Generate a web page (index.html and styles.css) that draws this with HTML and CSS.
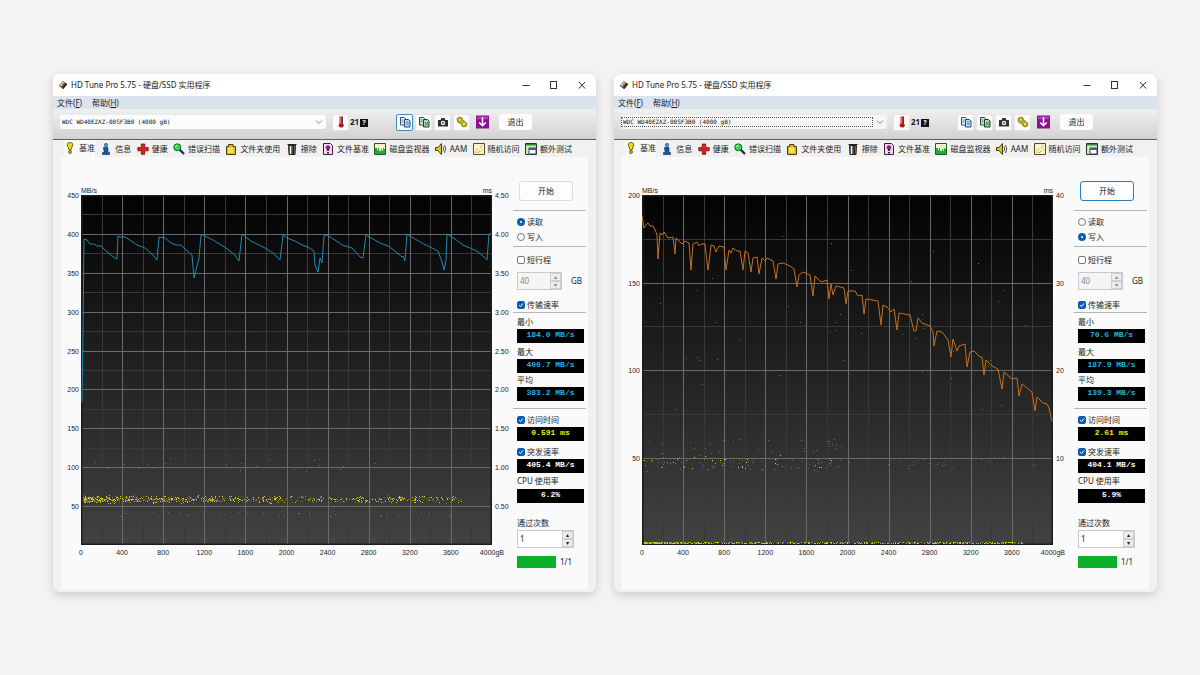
FILE: index.html
```html
<!DOCTYPE html>
<html lang="zh-CN">
<head>
<meta charset="utf-8">
<title>HD Tune Pro 5.75</title>
<link rel="stylesheet" href="styles.css">
</head>
<body>
<svg class="defs" aria-hidden="true">
  <defs>
    <linearGradient id="plot-bg" x1="0" y1="0" x2="0" y2="1"><stop offset="0" stop-color="#020202"/><stop offset="1" stop-color="#424242"/></linearGradient>
  </defs>
  <symbol id="i-app" viewBox="0 0 12 12"><path d="M1 7 6 1l5 4-5 6z" fill="#5b4636"/><path d="M2 6 6 1.500 8 3 4 8z" fill="#d8c8a8"/><path d="M6 8 10 4l1 1-5 6z" fill="#2d2623"/><circle cx="6" cy="5" r="1.200" fill="#b06a2c"/></symbol>
  <symbol id="i-min" viewBox="0 0 10 10"><path d="M1.500 5.500h7" stroke="#333" fill="none"/></symbol>
  <symbol id="i-max" viewBox="0 0 10 10"><rect x="1.500" y="1.500" width="6" height="7" stroke="#333" fill="none"/></symbol>
  <symbol id="i-close" viewBox="0 0 10 10"><path d="m2 2 6 6.500M8 2 2 8.500" stroke="#333" fill="none"/></symbol>
  <symbol id="i-chev" viewBox="0 0 8 6"><path d="M1 1.500 4 4.500 7 1.500" fill="none" stroke="#888"/></symbol>
  <symbol id="i-therm" viewBox="0 0 12 12"><path d="M4.500 .5h3v7h-3z" fill="#d41c1c"/><circle cx="6" cy="9.200" r="2.300" fill="#b81414"/><path d="M7.500 .5v7l1 2-1.500 2" stroke="#3c2222" fill="none" stroke-width=".8"/><path d="M5.500 1.500v6" stroke="#ff9a9a" stroke-width=".7"/></symbol>
  <symbol id="i-copy" viewBox="0 0 12 12"><path d="M1.500 1.500h4l1 1v6.500h-5z" fill="#e8f4ff" stroke="#35536f"/><path d="M5.500 3.500h4l1.500 1.500v6h-5.500z" fill="#b9dcf7" stroke="#244a73"/><path d="M2.500 4h2m-2 2h2M7 6h2.500M7 8h3" stroke="#3d7dc2"/></symbol>
  <symbol id="i-copyx" viewBox="0 0 12 12"><path d="M1.500 1.500h4l1 1v6.500h-5z" fill="#d9eedd" stroke="#2f4437"/><path d="M5.500 3.500h4l1.500 1.500v6h-5.500z" fill="#a9d8b4" stroke="#243b2c"/><path d="M2.500 4h2m-2 2h2M7 6l3 3.500M10 6 7 9.500" stroke="#268042"/></symbol>
  <symbol id="i-cam" viewBox="0 0 12 12"><path d="M1 4h2.500l1-2h3l1 2H11v6.500H1z" fill="#2c332f"/><circle cx="6" cy="7" r="2.200" fill="#f1f4f2"/><circle cx="6" cy="7" r="1.100" fill="#4f625a"/></symbol>
  <symbol id="i-gears" viewBox="0 0 12 12"><path d="M1.500 2 4 1l2 1 .500 2L9 5.500l2 2-.500 2.500-2.500 1L6 10 5 7.500 2 6.500 1 4z" fill="#b8ae1c" stroke="#7d760f" stroke-width=".8"/><circle cx="3.800" cy="3.800" r=".8" fill="#fbf9d0"/><circle cx="8" cy="8" r=".9" fill="#fbf9d0"/></symbol>
  <symbol id="i-down" viewBox="0 0 14 14"><path d="M0 0h14v14H0z" fill="#8a118e"/><path d="M1 1h12v3H1z" fill="#b43cb8"/><path d="M7 2v8M3.500 7.500 7 11l3.500-3.500" stroke="#fff" stroke-width="1.700" fill="none"/></symbol>
  <symbol id="i-bench" viewBox="0 0 12 12"><path d="M6 .5C8 .5 9 1.500 8.700 3L7 8H5L3.300 3C3 1.500 4 .5 6 .5z" fill="#e3dd1c" stroke="#4b480b" stroke-width=".8"/><circle cx="6" cy="10" r="1.500" fill="#d8d116" stroke="#4b480b" stroke-width=".8"/></symbol>
  <symbol id="i-info" viewBox="0 0 12 12"><circle cx="6" cy="2" r="1.700" fill="#31a4d8" stroke="#123c6b" stroke-width=".6"/><path d="M3.500 4.500h4.500v5H9.500v2H2.500v-2h1.500v-3H3.500z" fill="#1c55a8" stroke="#0e2850" stroke-width=".6"/></symbol>
  <symbol id="i-health" viewBox="0 0 12 12"><path d="M4.300 1h3.400v3.500h3.500v3.300H7.700v3.500H4.300V7.800H.8V4.500h3.500z" fill="#d92323" stroke="#701010" stroke-width=".8"/></symbol>
  <symbol id="i-scan" viewBox="0 0 12 12"><path d="m6.500 6.500 4.500 4.500" stroke="#1a2c55" stroke-width="2.300"/><circle cx="4.300" cy="4.300" r="3.500" fill="#37d84a" stroke="#12642a"/><path d="M2.500 4A2 2 0 0 1 4.500 2.300" stroke="#d4ffd9" fill="none"/></symbol>
  <symbol id="i-folder" viewBox="0 0 12 12"><path d="M1.500 3.500h2v-2H8v2h2.500v8h-9z" fill="#d9b61c" stroke="#4f3f09"/><path d="M3 4.500h5.500v5.500H3z" fill="#f5e05a"/></symbol>
  <symbol id="i-trash" viewBox="0 0 12 12"><path d="M1.500 1.500h9" stroke="#222"/><path d="M2.500 2.500h7l-.500 9H3z" fill="#777" stroke="#222"/><path d="M4.500 3v8" stroke="#eee"/><path d="M7.200 3v8" stroke="#222" stroke-width="1.500"/></symbol>
  <symbol id="i-filebench" viewBox="0 0 12 12"><path d="M1.500.5h7l2 2v9h-9z" fill="#efd7ee" stroke="#3a233a"/><circle cx="6" cy="4.500" r="2.300" fill="#862482"/><path d="M5 6h2v2H5zM5 9h2v1.500H5z" fill="#521550"/></symbol>
  <symbol id="i-mon" viewBox="0 0 12 12"><path d="M.5.5h11v11H.5z" fill="#f1f6c8" stroke="#28542c"/><path d="M1 11V5h2v2h1V5h1v3h2V6h1v2h1V5h1v1h1v5z" fill="#1fae35"/></symbol>
  <symbol id="i-aam" viewBox="0 0 12 12"><path d="M.500 4.500H3l3.500-4v11L3 7.500H.500z" fill="#d7c91e" stroke="#433e0b"/><path d="M8 3.500q1.500 2.500 0 5M9.500 2q2.500 4 0 8" stroke="#444" fill="none" stroke-width=".9"/></symbol>
  <symbol id="i-rand" viewBox="0 0 12 12"><path d="M.5.5h11v11H.5z" fill="#fbf4c8" stroke="#5a4a2a"/><path d="M2 9h1.500M3.500 6.500H5M6 8.500h1.500M7 4.500h1.500M8.500 7H10M4.500 9.500H6M8 2.500h1.500" stroke="#d6a43a"/></symbol>
  <symbol id="i-extra" viewBox="0 0 12 12"><path d="M.5.5h11v11H.5z" fill="#cfeab4" stroke="#26392a"/><path d="M1 1h10v1.500H1z" fill="#2d8a3c"/><path d="M4 5h7v6H4z" fill="#fff" stroke="#3f3f6e"/><path d="M4 5h7v2H4z" fill="#55519e"/></symbol>
</svg>

<main class="desk">
  <section class="window">
    <header class="title">
      <svg class="app-icon"><use href="#i-app"/></svg>
      <h1>HD Tune Pro 5.75 - 硬盘/SSD 实用程序</h1>
      <button class="cap" aria-label="最小化"><svg><use href="#i-min"/></svg></button>
      <button class="cap" aria-label="最大化"><svg><use href="#i-max"/></svg></button>
      <button class="cap" aria-label="关闭"><svg><use href="#i-close"/></svg></button>
    </header>
    <nav class="menu"><button>文件(<u>F</u>)</button><button>帮助(<u>H</u>)</button></nav>
    <div class="toolbar">
      <div class="combo"><select aria-label="驱动器"><option>WDC WD40EZAZ-00SF3B0 (4000 gB)</option></select><svg><use href="#i-chev"/></svg></div>
      <button class="tool" aria-label="温度"><svg><use href="#i-therm"/></svg></button>
      <span class="temp">21<b>?</b></span>
      <div class="tools">
        <button class="tool on" aria-label="复制信息"><svg><use href="#i-copy"/></svg></button>
        <button class="tool" aria-label="复制截图"><svg><use href="#i-copyx"/></svg></button>
        <button class="tool" aria-label="保存截图"><svg><use href="#i-cam"/></svg></button>
        <button class="tool" aria-label="选项"><svg><use href="#i-gears"/></svg></button>
        <button class="tool bare" aria-label="下载"><svg><use href="#i-down"/></svg></button>
      </div>
      <button class="exit">退出</button>
    </div>
    <div class="tabs" role="tablist">
      <button class="tab active" role="tab"><svg><use href="#i-bench"/></svg>基准</button>
      <button class="tab" role="tab"><svg><use href="#i-info"/></svg>信息</button>
      <button class="tab" role="tab"><svg><use href="#i-health"/></svg>健康</button>
      <button class="tab" role="tab"><svg><use href="#i-scan"/></svg>错误扫描</button>
      <button class="tab" role="tab"><svg><use href="#i-folder"/></svg>文件夹使用</button>
      <button class="tab" role="tab"><svg><use href="#i-trash"/></svg>擦除</button>
      <button class="tab" role="tab"><svg><use href="#i-filebench"/></svg>文件基准</button>
      <button class="tab" role="tab"><svg><use href="#i-mon"/></svg>磁盘监视器</button>
      <button class="tab" role="tab"><svg><use href="#i-aam"/></svg>AAM</button>
      <button class="tab" role="tab"><svg><use href="#i-rand"/></svg>随机访问</button>
      <button class="tab" role="tab"><svg><use href="#i-extra"/></svg>额外测试</button>
    </div>
    <div class="panel">
      <div class="chart">
        <div class="units"><span>MB/s</span><span>ms</span></div>
        <div class="axis left"><span>450</span><span>400</span><span>350</span><span>300</span><span>250</span><span>200</span><span>150</span><span>100</span><span>50</span></div>
        <svg class="plot" data-chart="read" viewBox="0 0 411 350" preserveAspectRatio="none" role="img" aria-label="读取速率曲线"></svg>
        <div class="axis right"><span>4.50</span><span>4.00</span><span>3.50</span><span>3.00</span><span>2.50</span><span>2.00</span><span>1.50</span><span>1.00</span><span>0.50</span></div>
        <div class="xaxis"><span>0</span><span>400</span><span>800</span><span>1200</span><span>1600</span><span>2000</span><span>2400</span><span>2800</span><span>3200</span><span>3600</span><span>4000gB</span></div>
      </div>
      <form class="side">
        <button type="button" class="start">开始</button>
        <div class="group radios">
          <label><input type="radio" name="mode-a" checked>读取</label>
          <label><input type="radio" name="mode-a">写入</label>
        </div>
        <div class="group stroke">
          <label><input type="checkbox">短行程</label>
          <div class="row"><span class="spin off"><input type="text" value="40" aria-label="短行程容量" disabled><span class="arrows"><button type="button" aria-label="增加" disabled></button><button type="button" aria-label="减少" disabled></button></span></span><span class="gb">GB</span></div>
          <label><input type="checkbox" checked>传输速率</label>
        </div>
        <div class="group rates">
          <span>最小</span><output class="cyan">184.0 MB/s</output>
          <span>最大</span><output class="cyan">400.7 MB/s</output>
          <span class="tight">平均</span><output class="cyan">383.2 MB/s</output>
        </div>
        <div class="group access">
          <label><input type="checkbox" checked>访问时间</label><output class="yellow">0.591 ms</output>
          <label><input type="checkbox" checked>突发速率</label><output>405.4 MB/s</output>
          <span>CPU 使用率</span><output>6.2%</output>
        </div>
        <label class="passes">通过次数<span class="spin"><input type="text" value="1"><span class="arrows"><button type="button" aria-label="增加次数"></button><button type="button" aria-label="减少次数"></button></span></span></label>
        <div class="done"><progress value="1" max="1" aria-label="进度"></progress><span>1/1</span></div>
      </form>
    </div>
  </section>

  <section class="window">
    <header class="title">
      <svg class="app-icon"><use href="#i-app"/></svg>
      <h1>HD Tune Pro 5.75 - 硬盘/SSD 实用程序</h1>
      <button class="cap" aria-label="最小化"><svg><use href="#i-min"/></svg></button>
      <button class="cap" aria-label="最大化"><svg><use href="#i-max"/></svg></button>
      <button class="cap" aria-label="关闭"><svg><use href="#i-close"/></svg></button>
    </header>
    <nav class="menu"><button>文件(<u>F</u>)</button><button>帮助(<u>H</u>)</button></nav>
    <div class="toolbar">
      <div class="combo focused"><select aria-label="驱动器"><option>WDC WD40EZAZ-00SF3B0 (4000 gB)</option></select><svg><use href="#i-chev"/></svg></div>
      <button class="tool" aria-label="温度"><svg><use href="#i-therm"/></svg></button>
      <span class="temp">21<b>?</b></span>
      <div class="tools">
        <button class="tool" aria-label="复制信息"><svg><use href="#i-copy"/></svg></button>
        <button class="tool" aria-label="复制截图"><svg><use href="#i-copyx"/></svg></button>
        <button class="tool" aria-label="保存截图"><svg><use href="#i-cam"/></svg></button>
        <button class="tool" aria-label="选项"><svg><use href="#i-gears"/></svg></button>
        <button class="tool bare" aria-label="下载"><svg><use href="#i-down"/></svg></button>
      </div>
      <button class="exit">退出</button>
    </div>
    <div class="tabs" role="tablist">
      <button class="tab active" role="tab"><svg><use href="#i-bench"/></svg>基准</button>
      <button class="tab" role="tab"><svg><use href="#i-info"/></svg>信息</button>
      <button class="tab" role="tab"><svg><use href="#i-health"/></svg>健康</button>
      <button class="tab" role="tab"><svg><use href="#i-scan"/></svg>错误扫描</button>
      <button class="tab" role="tab"><svg><use href="#i-folder"/></svg>文件夹使用</button>
      <button class="tab" role="tab"><svg><use href="#i-trash"/></svg>擦除</button>
      <button class="tab" role="tab"><svg><use href="#i-filebench"/></svg>文件基准</button>
      <button class="tab" role="tab"><svg><use href="#i-mon"/></svg>磁盘监视器</button>
      <button class="tab" role="tab"><svg><use href="#i-aam"/></svg>AAM</button>
      <button class="tab" role="tab"><svg><use href="#i-rand"/></svg>随机访问</button>
      <button class="tab" role="tab"><svg><use href="#i-extra"/></svg>额外测试</button>
    </div>
    <div class="panel">
      <div class="chart">
        <div class="units"><span>MB/s</span><span>ms</span></div>
        <div class="axis left"><span>200</span><span>150</span><span>100</span><span>50</span></div>
        <svg class="plot" data-chart="write" viewBox="0 0 411 350" preserveAspectRatio="none" role="img" aria-label="写入速率曲线"></svg>
        <div class="axis right"><span>40</span><span>30</span><span>20</span><span>10</span></div>
        <div class="xaxis"><span>0</span><span>400</span><span>800</span><span>1200</span><span>1600</span><span>2000</span><span>2400</span><span>2800</span><span>3200</span><span>3600</span><span>4000gB</span></div>
      </div>
      <form class="side">
        <button type="button" class="start on">开始</button>
        <div class="group radios">
          <label><input type="radio" name="mode-b">读取</label>
          <label><input type="radio" name="mode-b" checked>写入</label>
        </div>
        <div class="group stroke">
          <label><input type="checkbox">短行程</label>
          <div class="row"><span class="spin off"><input type="text" value="40" aria-label="短行程容量" disabled><span class="arrows"><button type="button" aria-label="增加" disabled></button><button type="button" aria-label="减少" disabled></button></span></span><span class="gb">GB</span></div>
          <label><input type="checkbox" checked>传输速率</label>
        </div>
        <div class="group rates">
          <span>最小</span><output class="cyan">70.6 MB/s</output>
          <span>最大</span><output class="cyan">187.9 MB/s</output>
          <span class="tight">平均</span><output class="cyan">139.3 MB/s</output>
        </div>
        <div class="group access">
          <label><input type="checkbox" checked>访问时间</label><output class="yellow">2.61 ms</output>
          <label><input type="checkbox" checked>突发速率</label><output>404.1 MB/s</output>
          <span>CPU 使用率</span><output>5.9%</output>
        </div>
        <label class="passes">通过次数<span class="spin"><input type="text" value="1"><span class="arrows"><button type="button" aria-label="增加次数"></button><button type="button" aria-label="减少次数"></button></span></span></label>
        <div class="done"><progress value="1" max="1" aria-label="进度"></progress><span>1/1</span></div>
      </form>
    </div>
  </section>
</main>
<script src="chart.js"></script>
</body>
</html>
```

FILE: styles.css
```css
* { box-sizing: border-box; }

body {
  margin: 0;
  min-height: 100vh;
  background: #f4f2f3;
  color: #1c1c1c;
  font: 8px/10px "Noto Sans", "Noto Sans CJK SC", sans-serif;
}

button, input, select {
  margin: 0;
  padding: 0;
  border: 0;
  background: none;
  color: inherit;
  font: inherit;
}

.defs { position: absolute; width: 0; height: 0; }

.desk {
  display: grid;
  grid-template-columns: 1fr 1fr;
  gap: 18px;
  padding: 74px 43px 40px 53px;
}

.window {
  min-width: 0;
  padding-bottom: 3px;
  overflow: hidden;
  border-radius: 7px;
  background: #f1f1f1;
  box-shadow: 0 3px 10px rgba(60, 50, 60, 0.2);
}

/* title bar and menu */
.title {
  display: flex;
  align-items: center;
  height: 22px;
  padding-left: 5px;
  background: #fff;
}
.app-icon { width: 10px; height: 10px; margin-right: 3px; }
.title h1 { flex: 1; margin: 0; font-size: 8px; font-weight: 400; }
.cap { display: grid; place-items: center; width: 28px; height: 22px; }
.cap svg { width: 10px; height: 10px; }

.menu {
  display: flex;
  gap: 10px;
  height: 13px;
  padding: 0 4px;
  background: #dbe4ee;
}

/* toolbar */
.toolbar {
  display: flex;
  align-items: center;
  height: 31px;
  padding: 0 64px 4px 7px;
  border-bottom: 1px solid #5f5f5f;
  background: linear-gradient(#f0f0f0, #d2d2d2);
}
.combo {
  display: flex;
  align-items: center;
  flex: 1;
  min-width: 0;
  height: 14px;
  margin-right: 6px;
  padding-right: 3px;
  border-radius: 2px;
  background: #fcfcfc;
}
.combo select {
  flex: 1;
  min-width: 0;
  height: 10px;
  padding-left: 1px;
  appearance: none;
  border: 1px solid transparent;
  color: #111;
  font: 6px/8px "DejaVu Sans Mono", monospace;
}
.combo.focused { background: #f6f6f6; }
.combo.focused select { border: 1px dotted #555; }
.combo svg { width: 8px; height: 6px; margin-left: 3px; }
.tool {
  display: grid;
  place-items: center;
  width: 17px;
  height: 17px;
  border: 1px solid #e4e4e4;
  border-radius: 2px;
  background: #fbfbfb;
}
.tool svg { width: 12px; height: 12px; }
.tool.on { border-color: #3c8cc8; }
.tool.bare { border: 0; background: none; }
.tool.bare svg { width: 13px; height: 14px; }
.temp { width: 47px; padding-left: 1px; font-weight: 700; }
.temp b {
  display: inline-block;
  margin-left: 1px;
  padding: 0 2px;
  background: #111;
  color: #ddd;
  font-size: 7px;
  line-height: 8px;
}
.tools { display: flex; gap: 2px; }
.tools .bare { margin-left: 2px; }
.exit {
  width: 33px;
  height: 16px;
  margin-left: 8px;
  border-radius: 2px;
  background: #fcfcfc;
}

/* tabs */
.tabs {
  display: flex;
  justify-content: space-between;
  height: 17px;
  padding: 0 24px 0 11px;
}
.tab {
  display: flex;
  align-items: center;
  gap: 3px;
  white-space: nowrap;
}
.tab svg { width: 12px; height: 12px; }
.tab.active { padding-bottom: 2px; background: #fafafa; }

.panel {
  display: grid;
  grid-template-columns: 1fr 75px;
  margin: 0 8px;
  padding-bottom: 21px;
  background: #fafafa;
}

/* chart */
.chart {
  display: grid;
  grid-template-columns: 20px 1fr 21px;
  grid-template-rows: auto 350px auto;
  align-content: start;
  min-width: 0;
  padding-top: 29px;
  font: 7px/9px "Liberation Sans", Arial, sans-serif;
}
.units {
  grid-column: 2;
  display: flex;
  justify-content: space-between;
}
.axis { display: flex; flex-direction: column; grid-row: 2; }
.axis span { flex: 1; margin-top: -4px; margin-bottom: 4px; }
.left { grid-column: 1; padding-right: 2px; text-align: right; }
.right { grid-column: 3; padding-left: 3px; }
.plot { grid-row: 2; grid-column: 2; width: 100%; height: 350px; display: block; }
.xaxis { grid-row: 3; grid-column: 2; display: flex; margin: 3px -5% 0; }
.xaxis span { flex: 1 1 0; min-width: 0; text-align: center; white-space: nowrap; }

.frame { fill: none; stroke: #1c1c1c; stroke-width: 3; }
.major { stroke: #6a6a6a; stroke-width: 1; vector-effect: non-scaling-stroke; }
.minor { stroke: #393939; stroke-width: 1; vector-effect: non-scaling-stroke; }
.curve { fill: none; stroke-width: 1; vector-effect: non-scaling-stroke; }
.curve.read { stroke: #2487ad; }
.curve.write { stroke: #c4701c; }
.dot { fill: #c8c81e; }
.dot.dim { fill: #77772a; }

/* side column */
.side { padding: 24px 2px 0 0; }
.side label { display: flex; align-items: center; }
.side input[type="radio"],
.side input[type="checkbox"] {
  appearance: none;
  width: 8px;
  height: 8px;
  margin-right: 2px;
  border: 1px solid #777;
  background: #fff;
}
.side input[type="radio"] { border-radius: 50%; }
.side input[type="radio"]:checked { border: 3px solid #0a5fb4; }
.side input[type="checkbox"] { border-radius: 2px; }
.side input[type="checkbox"]:checked {
  border-color: #0a5fb4;
  background: #0a5fb4 url("data:image/svg+xml,%3Csvg xmlns='http://www.w3.org/2000/svg' width='6' height='6'%3E%3Cpath d='M1 3 2.500 4.500 5 1.500' fill='none' stroke='white'/%3E%3C/svg%3E") no-repeat center;
}
.start {
  display: block;
  width: 54px;
  height: 20px;
  margin: 0 0 9px 6px;
  border: 1px solid #dadada;
  border-radius: 3px;
  background: #fdfdfd;
}
.start.on { border-color: #2b7dbd; }
.group { padding: 0 2px 0 4px; border-top: 1px solid #b4b4b4; }
.radios { display: grid; gap: 5px; padding-top: 6px; padding-bottom: 4px; }
.stroke { padding-top: 8px; padding-bottom: 2px; }
.row { display: flex; align-items: center; margin: 7px 0 10px; }
.gb { margin-left: 9px; }
.spin {
  display: flex;
  width: 57px;
  height: 18px;
  border: 1px solid #c9c9c9;
  background: #fff;
}
.spin input { flex: 1; min-width: 0; padding-left: 2px; }
.spin.off { width: 45px; background: #f5f5f5; color: #888; }
.arrows { display: grid; width: 11px; background: #ececec; }
.arrows button {
  display: grid;
  place-items: center;
  border: 1px solid #cfcfcf;
}
.arrows button::before { content: "▴"; font: 6px/6px "DejaVu Sans", sans-serif; }
.arrows button + button::before { content: "▾"; }
.side output {
  display: block;
  height: 14px;
  background: #000;
  color: #fff;
  font: bold 8px/11px "Liberation Mono", monospace;
  text-align: center;
}
.side .cyan { color: #27b1e0; }
.side .yellow { color: #ecec1c; }
.rates span { display: block; height: 16px; padding-top: 4px; }
.rates .tight { height: 14px; padding-top: 2px; }
.rates { padding-bottom: 7px; }
.access label { height: 18px; padding-top: 3px; }
.access span { display: block; height: 16px; padding-top: 3px; }
.side .passes { display: block; padding: 15px 0 0 4px; }
.passes .spin { margin-top: 2px; }
.done { display: flex; align-items: center; gap: 4px; margin-top: 8px; padding-left: 4px; }
.done progress {
  appearance: none;
  width: 39px;
  height: 12px;
  border: 0;
}
.done progress::-webkit-progress-bar { background: #e6e6e6; }
.done progress::-webkit-progress-value { background: #0bb02b; }
```

FILE: chart.js
```js
const NS = "http://www.w3.org/2000/svg";

const curves = {
  read: "1,207 2,135 3,44 6,45 9,49 13,49 16,51 20,51 24,55 30,60 34,63 36,64 37,41 39,42 44,42 49,45 56,50 64,53 70,58 76,65 78,42 84,43 90,48 95,50 100,50 105,55 111,60 113,83 115,75 118,63 120,40 122,40 132,45 145,53 154,60 158,66 161,39 170,46 184,53 192,58 199,65 202,40 206,43 214,46 221,50 227,52 233,56 234,70 237,77 239,63 241,68 243,41 246,40 254,45 261,50 271,53 279,62 282,63 285,40 292,44 299,48 307,51 314,56 321,62 322,61 324,66 326,39 334,44 341,48 349,52 357,56 361,67 363,75 365,65 366,39 374,44 382,50 396,56 403,62 406,65 408,39 410,39",
  write: "0,21 2,33 3,31 6,28 8,31 11,31 14,37 15,40 16,64 18,38 20,40 22,37 26,43 31,42 33,59 34,43 40,49 43,46 47,48 49,75 51,49 55,47 57,51 59,49 63,49 66,75 67,68 69,50 72,51 74,57 77,51 82,52 84,75 87,55 89,58 91,53 95,56 98,56 101,75 103,56 106,58 109,77 111,63 115,62 117,79 120,63 123,66 125,63 131,66 134,84 136,69 141,68 148,71 152,74 155,92 157,80 161,77 168,80 171,101 173,81 178,86 180,87 185,85 187,104 189,89 191,100 194,91 202,93 204,109 206,96 213,96 216,101 220,100 222,119 224,104 236,106 239,130 241,110 245,112 249,117 252,114 255,135 257,118 268,120 272,136 274,136 276,123 280,128 288,131 291,137 292,151 295,136 300,137 306,145 309,162 311,144 315,156 317,151 323,149 325,172 328,157 332,156 338,162 340,162 342,180 344,165 350,171 356,174 360,194 362,177 370,184 375,183 377,201 380,189 390,197 393,216 395,202 401,208 405,209 407,213 410,226"
};

function generator(seed) {
  let s = seed;
  return () => (s = (s * 16807) % 2147483647) / 2147483647;
}

function add(svg, tag, cls, attrs) {
  const el = document.createElementNS(NS, tag);
  if (cls) el.setAttribute("class", cls);
  for (const key in attrs) el.setAttribute(key, attrs[key]);
  svg.appendChild(el);
}

function dot(svg, x, y, dim) {
  add(svg, "rect", dim ? "dot dim" : "dot", { x: Math.round(x), y: Math.round(y), width: 1, height: 1 });
}

function drawGrid(svg, rows) {
  add(svg, "rect", "", { width: 411, height: 350, fill: "url(#plot-bg)" });
  for (const kind of ["minor", "major"]) {
    const odd = kind === "minor" ? 1 : 0;
    for (let i = odd; i < 20; i += 2) {
      const x = Math.round(i * 20.55) + 0.5;
      add(svg, "line", kind, { x1: x, x2: x, y1: 0, y2: 350 });
    }
    for (let i = odd; i < rows * 2; i += 2) {
      const y = Math.round(i * 175 / rows) + 0.5;
      add(svg, "line", kind, { x1: 0, x2: 411, y1: y, y2: y });
    }
  }
  add(svg, "rect", "frame", { width: 411, height: 350 });
}

function drawRead(svg) {
  const rnd = generator(4127);
  for (let i = 0; i < 820; i++) {
    const x = 2 + Math.pow(rnd(), 1.6) * 380;
    dot(svg, x, 304 + (rnd() + rnd() - 1) * 4, rnd() < 0.4);
  }
  for (let i = 0; i < 34; i++) dot(svg, rnd() * 380, 317 + rnd() * 4, true);
  for (let i = 0; i < 26; i++) dot(svg, rnd() * 300, 262 + rnd() * 14, true);
}

function drawWrite(svg) {
  const rnd = generator(991);
  for (let i = 0; i < 480; i++) dot(svg, 2 + Math.pow(rnd(), 1.4) * 380, 347 + rnd() * 1.2, rnd() < 0.2);
  for (let i = 0; i < 110; i++) dot(svg, rnd() * 190, 268 + (rnd() + rnd() - 1) * 9, rnd() < 0.65);
  for (let i = 0; i < 28; i++) dot(svg, 190 + rnd() * 205, 262 + rnd() * 12, true);
  for (let i = 0; i < 30; i++) dot(svg, rnd() * 200, 244 + rnd() * 16, true);
  for (let i = 0; i < 45; i++) dot(svg, rnd() * 400, 40 + rnd() * 190, true);
}

for (const svg of document.querySelectorAll(".plot")) {
  const name = svg.dataset.chart;
  drawGrid(svg, name === "read" ? 9 : 4);
  (name === "read" ? drawRead : drawWrite)(svg);
  add(svg, "polyline", "curve " + name, { points: curves[name] });
}
```
